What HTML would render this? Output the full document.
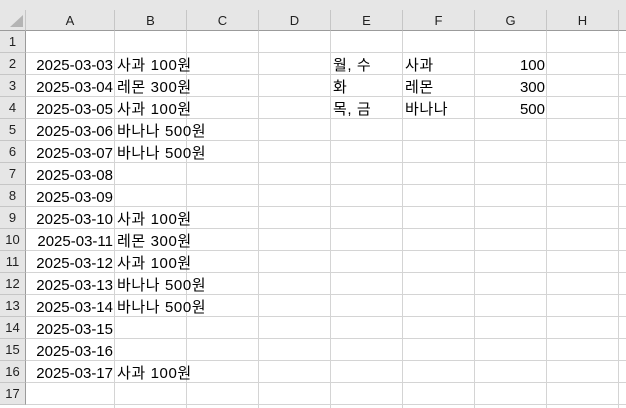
<!DOCTYPE html><html><head><meta charset="utf-8"><style>
body{margin:0;width:626px;height:408px;overflow:hidden;background:#fff;font-family:"Liberation Sans","Noto Sans CJK KR",sans-serif;}
.a{position:absolute;box-sizing:border-box;}
.top{left:0;top:0;width:626px;height:10px;background:#e6e6e6;}
.ch{top:10px;height:21px;background:#e6e6e6;border-right:1px solid #c6c6c6;border-bottom:1px solid #9b9b9b;font-size:13px;color:#222;text-align:center;line-height:21px;}
.rh{left:0;width:26px;height:22px;background:#e6e6e6;border-bottom:1px solid #c6c6c6;border-right:1px solid #9b9b9b;font-size:13px;color:#222;text-align:center;line-height:22px;}
.vl{top:31px;width:1px;height:377px;background:#d4d4d4;}
.hl{left:26px;width:600px;height:1px;background:#d4d4d4;}
.t{font-size:15px;color:#000;line-height:22px;white-space:nowrap;margin-top:1.5px;}
.k{letter-spacing:0.6px;}
</style></head><body>
<div class="a top"></div>
<div class="a" style="left:0;top:10px;width:26px;height:21px;background:#e6e6e6;border-right:1px solid #c6c6c6;border-bottom:1px solid #9b9b9b"></div>
<svg class="a" style="left:8px;top:14px" width="16" height="14"><polygon points="15,1 15,13 2,13" fill="#b4b4b4"/></svg>
<div id="g"></div>
<script>
var cols=[26,115,187,259,331,403,475,547,619,700],names="ABCDEFGH".split(""),h="";
for(var i=0;i<8;i++){h+='<div class="a ch" style="left:'+cols[i]+'px;width:'+(cols[i+1]-cols[i])+'px">'+names[i]+'</div>';}
h+='<div class="a ch" style="left:619px;width:20px"></div>';
for(var r=0;r<17;r++){var y=31+r*22;h+='<div class="a rh" style="top:'+y+'px">'+(r+1)+'</div>';h+='<div class="a hl" style="top:'+(y+21)+'px"></div>';}
for(var i=1;i<9;i++)h+='<div class="a vl" style="left:'+(cols[i]-1)+'px"></div>';
var A={2:"03",3:"04",4:"05",5:"06",6:"07",7:"08",8:"09",9:"10",10:"11",11:"12",12:"13",13:"14",14:"15",15:"16",16:"17"};
var B={2:"사과 100원",3:"레몬 300원",4:"사과 100원",5:"바나나 500원",6:"바나나 500원",9:"사과 100원",10:"레몬 300원",11:"사과 100원",12:"바나나 500원",13:"바나나 500원",16:"사과 100원"};
for(var k in A){var y=31+(k-1)*22;h+='<div class="a t" style="top:'+y+'px;left:26px;width:87px;text-align:right">2025-03-'+A[k]+'</div>';}
for(var k in B){var y=31+(k-1)*22;h+='<div class="a t k" style="top:'+y+'px;left:117px">'+B[k]+'</div>';}
var E=["월, 수","화","목, 금"],F=["사과","레몬","바나나"],G=["100","300","500"];
for(var i=0;i<3;i++){var y=31+(i+1)*22;h+='<div class="a t k" style="top:'+y+'px;left:333px">'+E[i]+'</div><div class="a t k" style="top:'+y+'px;left:405px">'+F[i]+'</div><div class="a t" style="top:'+y+'px;left:475px;width:70px;text-align:right">'+G[i]+'</div>';}
document.getElementById("g").innerHTML=h;
</script>
</body></html>
